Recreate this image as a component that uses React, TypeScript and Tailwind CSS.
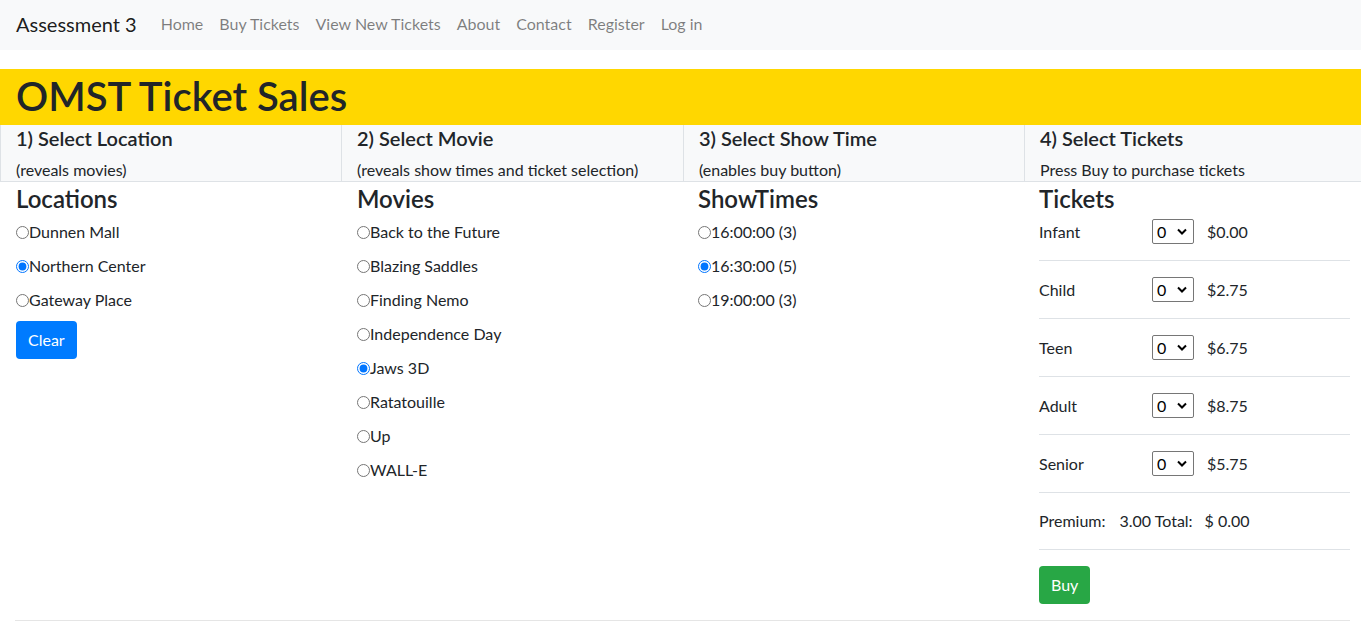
import React from 'react';

const locations = ['Dunnen Mall', 'Northern Center', 'Gateway Place'];
const movies = [
  'Back to the Future',
  'Blazing Saddles',
  'Finding Nemo',
  'Independence Day',
  'Jaws 3D',
  'Ratatouille',
  'Up',
  'WALL-E',
];
const showTimes = ['16:00:00 (3)', '16:30:00 (5)', '19:00:00 (3)'];
const tickets = [
  { label: 'Infant', price: '$0.00' },
  { label: 'Child', price: '$2.75' },
  { label: 'Teen', price: '$6.75' },
  { label: 'Adult', price: '$8.75' },
  { label: 'Senior', price: '$5.75' },
];

const steps = [
  { title: '1) Select Location', note: '(reveals movies)' },
  { title: '2) Select Movie', note: '(reveals show times and ticket selection)' },
  { title: '3) Select Show Time', note: '(enables buy button)' },
  { title: '4) Select Tickets', note: 'Press Buy to purchase tickets' },
];

function RadioList({ name, items, selected }: { name: string; items: string[]; selected: number }) {
  return (
    <div>
      {items.map((item, i) => (
        <label key={item} className="flex h-6 items-center mb-[10px] text-base leading-6">
          <input
            type="radio"
            name={name}
            defaultChecked={i === selected}
            className="m-0 h-[13px] w-[13px] accent-[#0075ff]"
          />
          <span>{item}</span>
        </label>
      ))}
    </div>
  );
}

function QtySelect() {
  return (
    <div className="relative h-[25px] w-[42px]">
      <select
        defaultValue="0"
        className="h-full w-full appearance-none rounded-[2px] border border-[#767676] bg-white pl-[4px] text-base leading-none text-black"
      >
        {[0, 1, 2, 3, 4, 5].map((n) => (
          <option key={n} value={n}>
            {n}
          </option>
        ))}
      </select>
      <svg
        className="pointer-events-none absolute right-[7px] top-[9px]"
        width="10"
        height="7"
        viewBox="0 0 10 7"
      >
        <path d="M1 1.5l4 4 4-4" fill="none" stroke="#000" strokeWidth="2" />
      </svg>
    </div>
  );
}

export default function App() {
  return (
    <div className="min-h-[627px] bg-white font-['Lato',sans-serif] text-[#212529]">
      {/* navbar */}
      <nav className="flex h-[50px] items-center bg-[#f8f9fa] px-4 pb-[2px]">
        <span className="mr-4 text-xl leading-[30px] text-[rgba(0,0,0,0.9)]">Assessment 3</span>
        <ul className="flex items-center">
          {['Home', 'Buy Tickets', 'View New Tickets', 'About', 'Contact', 'Register', 'Log in'].map((l) => (
            <li key={l}>
              <a className="block px-2 text-base leading-6 text-[rgba(0,0,0,0.5)]">{l}</a>
            </li>
          ))}
        </ul>
      </nav>

      <div className="mt-[19px] bg-[#ffd700] px-4">
        <h1 className="h-14 text-[40px] font-semibold leading-[54px]">OMST Ticket Sales</h1>
      </div>

      {/* step headers */}
      <div className="grid grid-cols-[341px_342px_341px_1fr] border-b border-[#dee2e6] bg-[#f8f9fa]">
        {steps.map((s) => (
          <div key={s.title} className="border-l border-[#dee2e6] px-[15px] pt-px">
            <h5 className="mb-[9px] text-xl font-semibold leading-6">{s.title}</h5>
            <p className="text-base leading-[22px]">{s.note}</p>
          </div>
        ))}
      </div>

      {/* selections */}
      <div className="grid grid-cols-[341px_342px_341px_1fr]">
        <div className="px-4 pt-[2px]">
          <h4 className="mb-[7px] text-2xl font-semibold leading-[29px]">Locations</h4>
          <RadioList name="location" items={locations} selected={1} />
          <button className="-mt-px h-[38px] rounded bg-[#007bff] px-3 text-base text-white">Clear</button>
        </div>
        <div className="px-4 pt-[2px]">
          <h4 className="mb-[7px] text-2xl font-semibold leading-[29px]">Movies</h4>
          <RadioList name="movie" items={movies} selected={4} />
        </div>
        <div className="px-[15px] pt-[2px]">
          <h4 className="mb-[7px] text-2xl font-semibold leading-[29px]">ShowTimes</h4>
          <RadioList name="showtime" items={showTimes} selected={1} />
        </div>
        <div className="pl-[15px] pr-[11px] pt-[2px]">
          <h4 className="mb-[6px] text-2xl font-semibold leading-[29px]">Tickets</h4>
          {tickets.map((t, i) => (
            <div
              key={t.label}
              className={
                i === 0
                  ? 'flex h-[42px] items-start border-b border-[#dee2e6]'
                  : 'flex h-[58px] items-start border-b border-[#dee2e6] pt-4'
              }
            >
              <div className="flex h-[25px] items-center">
                <span className="w-[113px]">{t.label}</span>
                <QtySelect />
                <span className="ml-[13px]">{t.price}</span>
              </div>
            </div>
          ))}
          <div className="flex h-[57px] items-center border-b border-[#dee2e6] pb-px">
            <span>Premium:</span>
            <span className="ml-[14px]">3.00 Total:</span>
            <span className="ml-[12px]">$ 0.00</span>
          </div>
          <div className="pt-4">
            <button className="h-[38px] rounded bg-[#28a745] px-3 text-base text-white">Buy</button>
          </div>
        </div>
      </div>

      <div className="px-[15px] pr-[11px] pt-4">
        <hr className="border-t border-[#e5e5e5]" />
      </div>
    </div>
  );
}
